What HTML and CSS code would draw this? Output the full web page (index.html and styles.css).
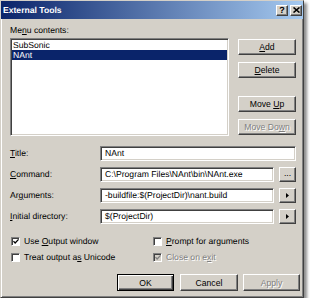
FILE: index.html
```html
<!DOCTYPE html>
<html lang="en">
<head>
    <meta charset="UTF-8">
    <title>External Tools</title>
    <link rel="stylesheet" href="styles.css">
</head>
<body>

<div class="dialog">
    <div class="titlebar">
        <span class="title">External Tools</span>
        <span class="caption-btns">
            <span class="cap-btn cap-help">?</span>
            <span class="cap-btn">
                <svg width="7" height="6" viewBox="0 0 7 6"><path d="M0.5 0.5 L6.5 5.5 M6.5 0.5 L0.5 5.5" stroke="#000" stroke-width="1.6"/></svg>
            </span>
        </span>
    </div>

    <div class="body">
        <div class="menu-label">Me<u>n</u>u contents:</div>

        <!-- list and its buttons -->
        <div class="top">
            <div class="listbox">
                <div class="item">SubSonic</div>
                <div class="item selected">NAnt</div>
            </div>
            <div class="side-btns">
                <button class="btn btn-add"><u>A</u>dd</button>
                <button class="btn btn-delete"><u>D</u>elete</button>
                <button class="btn btn-up">Move <u>U</u>p</button>
                <button class="btn btn-down disabled">Move Do<u>w</u>n</button>
            </div>
        </div>

        <!-- tool fields -->
        <div class="fields">
            <label><u>T</u>itle:</label>
            <div class="textbox wide">NAnt</div>

            <label><u>C</u>ommand:</label>
            <div class="field-row">
                <div class="textbox">C:\Program Files\NAnt\bin\NAnt.exe</div>
                <button class="btn small-btn browse">...</button>
            </div>

            <label>Ar<u>g</u>uments:</label>
            <div class="field-row">
                <div class="textbox">-buildfile:$(ProjectDir)\nant.build</div>
                <button class="btn small-btn"><svg width="3" height="5" viewBox="0 0 3 5"><path d="M0 0 L3 2.5 L0 5 Z" fill="#000"/></svg></button>
            </div>

            <label><u>I</u>nitial directory:</label>
            <div class="field-row">
                <div class="textbox">$(ProjectDir)</div>
                <button class="btn small-btn"><svg width="3" height="5" viewBox="0 0 3 5"><path d="M0 0 L3 2.5 L0 5 Z" fill="#000"/></svg></button>
            </div>
        </div>

        <!-- options -->
        <div class="options">
            <div class="option">
                <span class="check"><svg width="7" height="7" viewBox="0 0 7 7"><path d="M0.5 3 L2.5 5.2 L6.5 1" stroke="#000" stroke-width="1.5" fill="none"/></svg></span>
                <span>Use <u>O</u>utput window</span>
            </div>
            <div class="option">
                <span class="check"></span>
                <span><u>P</u>rompt for arguments</span>
            </div>
            <div class="option">
                <span class="check"></span>
                <span>Treat output a<u>s</u> Unicode</span>
            </div>
            <div class="option disabled">
                <span class="check check-disabled"><svg width="7" height="7" viewBox="0 0 7 7"><path d="M0.5 3 L2.5 5.2 L6.5 1" stroke="#808080" stroke-width="1.5" fill="none"/></svg></span>
                <span>Close on e<u>x</u>it</span>
            </div>
        </div>

        <div class="footer">
            <button class="btn btn-ok">OK</button>
            <button class="btn btn-cancel">Cancel</button>
            <button class="btn btn-apply disabled">Apply</button>
        </div>
    </div>
</div>

</body>
</html>
```

FILE: styles.css
```css
body {
    margin: 0;
    background: #fff;
    font-family: "Liberation Sans", Arial, sans-serif;
    font-size: 8.6px;
    color: #000;
    text-rendering: geometricPrecision;
}
.dialog {
    width: 302px;
    height: 296px;
    background: #d4d0c8;
    border: 1px solid;
    border-color: #d4d0c8 #404040 #404040 #d4d0c8;
    box-shadow: inset 1px 1px #fff, inset -1px -1px #808080, 3px 3px 3px rgba(0, 0, 0, 0.45);
}
.titlebar {
    height: 18px;
    display: flex;
    align-items: center;
    justify-content: space-between;
    background: linear-gradient(to right, #0a246a, #a6caf0);
}
.title {
    color: #fff;
    font-weight: bold;
    font-size: 8.6px;
    padding-left: 2px;
}
.caption-btns {
    display: flex;
    gap: 2px;
    padding-right: 1px;
}
.cap-btn {
    box-sizing: border-box;
    width: 12px;
    height: 11px;
    display: flex;
    align-items: center;
    justify-content: center;
    background: #d4d0c8;
    border: 1px solid;
    border-color: #fff #404040 #404040 #fff;
    box-shadow: inset -1px -1px #808080;
    font-weight: bold;
    font-size: 9px;
    line-height: 9px;
}
.body {
    padding: 0 5px 0 9px;
}
.menu-label {
    height: 11px;
    line-height: 11px;
    margin-top: 6px;
    margin-bottom: 2px;
}
.top {
    display: flex;
    gap: 9px;
}
.listbox {
    box-sizing: border-box;
    width: 219px;
    height: 98px;
    background: #fff;
    border: 1px solid;
    border-color: #808080 #fff #fff #808080;
    box-shadow: inset 1px 1px #404040, inset -1px -1px #d4d0c8;
    padding: 1px 1px 0 1px;
}
.item {
    height: 10px;
    line-height: 10px;
    padding-left: 1px;
}
.item.selected {
    background: #0a246a;
    color: #fff;
}
.side-btns {
    display: flex;
    flex-direction: column;
    width: 58px;
}
.btn {
    box-sizing: border-box;
    margin: 0;
    padding: 0;
    background: #d4d0c8;
    border: 1px solid;
    border-color: #fff #404040 #404040 #fff;
    box-shadow: inset -1px -1px #808080;
    font-family: inherit;
    font-size: 8.6px;
    color: #000;
    text-align: center;
    white-space: nowrap;
}
.side-btns .btn {
    height: 16px;
}
.btn-add {
    margin-top: 1px;
}
.btn-delete {
    margin-top: 7px;
}
.btn-up {
    margin-top: 18px;
}
.btn-down {
    margin-top: 7px;
}
.disabled {
    color: #808080;
    text-shadow: 1px 1px #fff;
}
.btn.disabled {
    color: #808080;
}
.fields {
    display: grid;
    grid-template-columns: 90px 196px;
    grid-auto-rows: 15px;
    row-gap: 6px;
    margin-top: 10px;
    align-items: center;
}
.fields label {
    line-height: 11px;
}
.field-row {
    display: flex;
    gap: 5px;
    height: 15px;
}
.textbox {
    box-sizing: border-box;
    width: 174px;
    height: 15px;
    line-height: 11px;
    background: #fff;
    border: 1px solid;
    border-color: #808080 #fff #fff #808080;
    box-shadow: inset 1px 1px #404040, inset -1px -1px #d4d0c8;
    padding: 1px 0 0 4px;
    white-space: nowrap;
    overflow: hidden;
}
.textbox.wide {
    width: 196px;
}
.small-btn {
    width: 17px;
    height: 15px;
    line-height: 5px;
}
.browse {
    line-height: 9px;
    padding-bottom: 2px;
}
.options {
    display: grid;
    grid-template-columns: 142px 1fr;
    grid-auto-rows: 14px;
    row-gap: 2px;
    margin-top: 10px;
    padding-left: 1px;
}
.option {
    display: flex;
    align-items: center;
    gap: 4px;
}
.check {
    box-sizing: border-box;
    width: 9px;
    height: 9px;
    background: #fff;
    border: 1px solid;
    border-color: #808080 #fff #fff #808080;
    box-shadow: inset 1px 1px #404040;
    display: flex;
    align-items: center;
    justify-content: center;
    padding: 1px 0 0 1px;
}
.check-disabled {
    background: #d4d0c8;
}
.footer {
    display: flex;
    justify-content: flex-end;
    margin-top: 10px;
    margin-right: -2px;
}
.footer .btn {
    height: 17px;
}
.btn-ok {
    width: 57px;
    border-color: #000;
    box-shadow: inset 1px 1px #fff, inset -1px -1px #404040, inset -2px -2px #808080;
}
.btn-cancel {
    width: 58px;
    margin-left: 6px;
}
.btn-apply {
    width: 57px;
    margin-left: 5px;
}
```
